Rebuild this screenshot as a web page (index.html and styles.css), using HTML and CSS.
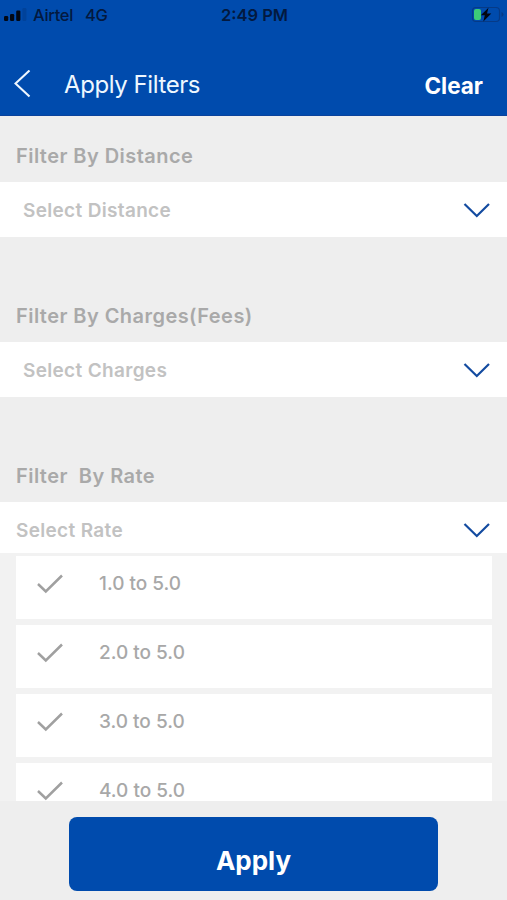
FILE: index.html
```html
<!DOCTYPE html>
<html lang="en">
<head>
<meta charset="utf-8">
<title>Apply Filters</title>
<link rel="stylesheet" href="styles.css">
</head>
<body>
<div class="screen">
  <header class="header">
    <div class="status">
      <div class="carrier">
        <svg class="signal" width="24" height="14" viewBox="0 0 24 14"><rect x="0" y="8" width="4.2" height="5" rx="1.2"/><rect x="6" y="6" width="4.2" height="7" rx="1.2"/><rect x="12.2" y="2.5" width="4.2" height="10.500" rx="1.2"/><rect x="18.4" y="0" width="4" height="13" rx="1.2" opacity=".12"/></svg>
        <span class="airtel">Airtel</span><span class="network">4G</span>
      </div>
      <div class="clock">2:49 PM</div>
      <svg class="battery" width="34" height="18" viewBox="0 0 34 18"><rect x="1.5" y="1.5" width="27" height="14" rx="3.5" fill="none" stroke="#063a86" stroke-width="1.2"/><path d="M30.5 6v5q2-.7 2-2.500T30.5 6" fill="#063a86"/><rect x="3" y="3" width="7" height="11" rx="2" fill="#3ccb78"/><path d="M17.500 1.800 9.800 9.300h4L12.300 15.600 20.300 7.600h-4.300z" fill="#02060f"/></svg>
    </div>
    <div class="nav">
      <svg class="back" width="18" height="30" viewBox="0 0 18 30"><path d="M15.500 1L1.500 14l14 13" transform="translate(0 -.5)" fill="none" stroke="#eef7ff" stroke-width="2.100"/></svg>
      <h1 class="title">Apply Filters</h1>
      <span class="clear">Clear</span>
    </div>
  </header>
  <section class="filter">
    <h2 class="label">Filter By Distance</h2>
    <div class="field"><span>Select Distance</span><svg class="chevron" width="28" height="16" viewBox="0 0 28 16"><path d="M1.500 2l12.300 12L26 2" /></svg></div>
  </section>
  <section class="filter">
    <h2 class="label">Filter By Charges(Fees)</h2>
    <div class="field"><span>Select Charges</span><svg class="chevron" width="28" height="16" viewBox="0 0 28 16"><path d="M1.500 2l12.300 12L26 2" /></svg></div>
  </section>
  <section class="filter">
    <h2 class="label">Filter&nbsp; By Rate</h2>
    <div class="field open"><span>Select Rate</span><svg class="chevron" width="28" height="16" viewBox="0 0 28 16"><path d="M1.500 2l12.300 12L26 2" /></svg></div>
    <ul class="options">
      <li class="option"><svg class="check" width="28" height="20" viewBox="0 0 28 20"><path d="M2 10l7.800 7.500L26 1.500"/></svg><span>1.0 to 5.0</span></li>
      <li class="option"><svg class="check" width="28" height="20" viewBox="0 0 28 20"><path d="M2 10l7.800 7.500L26 1.500"/></svg><span>2.0 to 5.0</span></li>
      <li class="option"><svg class="check" width="28" height="20" viewBox="0 0 28 20"><path d="M2 10l7.800 7.500L26 1.500"/></svg><span>3.0 to 5.0</span></li>
      <li class="option"><svg class="check" width="28" height="20" viewBox="0 0 28 20"><path d="M2 10l7.800 7.500L26 1.500"/></svg><span>4.0 to 5.0</span></li>
    </ul>
  </section>
  <footer class="footer"><button class="apply">Apply</button></footer>
</div>
</body>
</html>
```
FILE: styles.css
```css
* { box-sizing: border-box; }
body { margin: 0; font-family: Inter, "Liberation Sans", sans-serif; }
h1, h2, ul { margin: 0; padding: 0; }
svg { display: block; flex: none; }
span, h1, h2 { white-space: nowrap; }
.screen { width: 507px; height: 900px; background: #eee; overflow: hidden; }
.header { height: 116px; background: #004bad; border-bottom: 1px solid #0a429c; }
.status { height: 29px; display: grid; grid-template-columns: 1fr auto 1fr; align-items: center; padding: 0 2px 0 4px; color: #03193f; font-size: 16.500px; font-weight: 500; }
.carrier { display: flex; align-items: center; }
.signal { fill: #020814; }
.airtel { margin-left: 5px; letter-spacing: -0.3px; }
.network { margin-left: 12px; letter-spacing: -0.5px; }
.clock { font-weight: 600; }
.battery { justify-self: end; }
.nav { height: 86px; display: flex; align-items: center; padding: 25px 24px 0 14px; }
.title { margin-left: 32px; font-size: 24px; font-weight: 400; letter-spacing: -0.42px; color: #eef7ff; }
.clear { margin-left: auto; font-size: 22.500px; font-weight: 700; color: #fff; padding-top: 1px; }
.filter { height: 160px; }
.label { height: 66px; padding: 14px 0 0 16px; line-height: 52px; font-size: 20px; font-weight: 600; letter-spacing: 0.45px; color: #a9a9a9; }
.field { height: 55px; padding: 0 16px 0 23px; display: flex; align-items: center; justify-content: space-between; background: #fff; color: #c2c2c2; font-size: 19px; font-weight: 600; letter-spacing: 0.33px; }
.field span { padding-top: 2px; }
.field.open { height: 51px; padding-left: 16px; padding-top: 4px; }
.chevron path { fill: none; stroke: #134ba0; stroke-width: 2.200; }
.options { list-style: none; height: 248px; overflow: hidden; padding: 3px 15px 0 16px; background: #f2f2f2; display: flex; flex-direction: column; gap: 6px; }
.option { height: 63px; flex: none; background: #fff; display: flex; align-items: center; padding: 0 0 8px 20px; color: #a8a8a8; font-size: 19px; font-weight: 500; }
.option span { margin-left: 35px; }
.check path { fill: none; stroke: #a0a0a0; stroke-width: 2.500; }
.filter:last-of-type { height: 365px; }
.footer { height: 99px; padding: 16px 69px 0; }
.apply { display: block; width: 369px; height: 74px; border: 0; border-radius: 8px; padding: 12px 0 0; background: #004bad; color: #fff; font: 700 26px Inter, sans-serif; }
```
